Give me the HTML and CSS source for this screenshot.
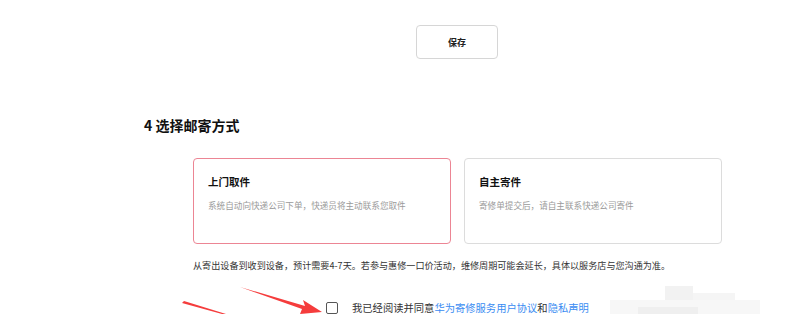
FILE: index.html
```html
<!DOCTYPE html>
<html lang="zh-CN">
<head>
<meta charset="UTF-8">
<meta name="viewport" content="width=device-width, initial-scale=1.0">
<title>选择邮寄方式</title>
<link rel="stylesheet" href="styles.css">
</head>
<body>

<div class="page">
    <div class="save-row">
        <button class="save-btn">保存</button>
    </div>

    <h2 class="section-title">4 选择邮寄方式</h2>

    <div class="options">
        <div class="option active">
            <div class="option-title">上门取件</div>
            <div class="option-desc">系统自动向快递公司下单，快递员将主动联系您取件</div>
        </div>
        <div class="option">
            <div class="option-title">自主寄件</div>
            <div class="option-desc">寄修单提交后，请自主联系快递公司寄件</div>
        </div>
    </div>

    <p class="note">从寄出设备到收到设备，预计需要4-7天。若参与惠修一口价活动，维修周期可能会延长，具体以服务店与您沟通为准。</p>

    <label class="agree">
        <span class="checkbox"></span>
        <span class="agree-text">我已经阅读并同意<a href="#">华为寄修服务用户协议</a>和<a href="#">隐私声明</a></span>
    </label>
</div>

<div class="blur-patch">
    <span class="px p1"></span>
    <span class="px p2"></span>
    <span class="px p3"></span>
    <span class="px p4"></span>
</div>

<svg class="arrows" width="800" height="314" viewBox="0 0 800 314">
    <path d="M240 287 L305 306 L303 300 L322 312 L300 314 L302 309 Z" fill="#f53c3c"/>
    <path d="M182 303 L222 314 L226 314 L184 301 Z" fill="#f53c3c"/>
</svg>

</body>
</html>
```

FILE: styles.css
```css
body {
    margin: 0;
    background: #fff;
    font-family: "Noto Sans CJK SC", "Noto Sans", sans-serif;
    color: #222;
    height: 314px;
    overflow: hidden;
}

.page {
    padding-left: 144px;
}

.save-row {
    padding-top: 25px;
    padding-left: 272px;
}

.save-btn {
    width: 82px;
    height: 34px;
    border: 1px solid #d6d6d6;
    border-radius: 4px;
    background: #fff;
    font-family: inherit;
    font-size: 9px;
    font-weight: 700;
    color: #222;
    padding: 0;
}

.section-title {
    margin: 56px 0 0;
    font-size: 14px;
    line-height: 20px;
    font-weight: 700;
    color: #111;
}

.options {
    display: flex;
    gap: 13px;
    margin: 23px 0 0 49px;
}

.option {
    width: 242px;
    height: 84px;
    border: 1px solid #dcdcdc;
    border-radius: 4px;
    padding-left: 14px;
}

.option.active {
    border-color: #ec8594;
}

.option-title {
    margin-top: 16px;
    font-size: 10.5px;
    line-height: 14px;
    font-weight: 700;
    color: #111;
}

.option-desc {
    margin-top: 10px;
    font-size: 8.6px;
    line-height: 12px;
    color: #9a9a9a;
}

.note {
    margin: 14px 0 0 49px;
    font-size: 9.1px;
    line-height: 14px;
    color: #333;
}

.agree {
    display: flex;
    align-items: center;
    gap: 14px;
    margin: 29px 0 0 182px;
}

.checkbox {
    width: 10px;
    height: 10px;
    border: 1px solid #555;
    border-radius: 2px;
}

.agree-text {
    font-size: 10.3px;
    line-height: 14px;
    color: #333;
}

.agree-text a {
    color: #3a8cf2;
    text-decoration: none;
}

.blur-patch {
    position: absolute;
    left: 610px;
    top: 286px;
    width: 150px;
    height: 28px;
}

.px {
    position: absolute;
    background: #f4f4f4;
}

.p1 { left: 0; top: 14px; width: 150px; height: 14px; background: #f7f7f7; }
.p2 { left: 55px; top: 0; width: 28px; height: 14px; background: #f2f2f2; }
.p3 { left: 83px; top: 7px; width: 42px; height: 7px; background: #f5f5f5; }
.p4 { left: 28px; top: 21px; width: 60px; height: 7px; background: #efefef; }

.arrows {
    position: absolute;
    left: 0;
    top: 0;
    pointer-events: none;
}
```
